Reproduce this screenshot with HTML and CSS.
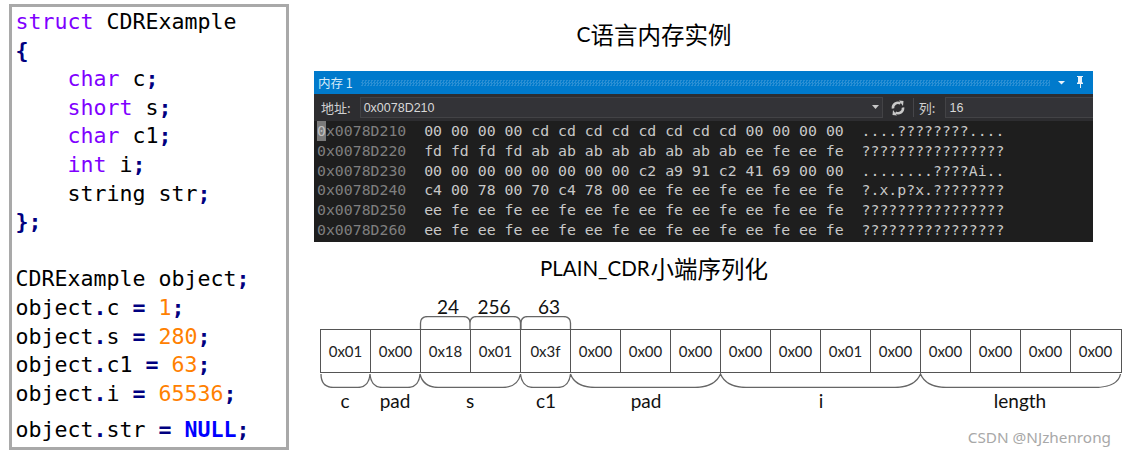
FILE: index.html
```html
<!DOCTYPE html>
<html lang="zh">
<head>
<meta charset="utf-8">
<title>CDR</title>
<link rel="stylesheet" href="styles.css">
</head>
<body>
<div class="page">
  <section class="code">
    <div class="ln"><span class="k">struct</span> CDRExample</div>
    <div class="ln"><span class="p">{</span></div>
    <div class="ln">    <span class="k">char</span> c<span class="p">;</span></div>
    <div class="ln">    <span class="k">short</span> s<span class="p">;</span></div>
    <div class="ln">    <span class="k">char</span> c1<span class="p">;</span></div>
    <div class="ln">    <span class="k">int</span> i<span class="p">;</span></div>
    <div class="ln">    string str<span class="p">;</span></div>
    <div class="ln"><span class="p">};</span></div>
    <div class="ln"> </div>
    <div class="ln">CDRExample object<span class="p">;</span></div>
    <div class="ln">object<span class="p">.</span>c <span class="p">=</span> <span class="n">1</span><span class="p">;</span></div>
    <div class="ln">object<span class="p">.</span>s <span class="p">=</span> <span class="n">280</span><span class="p">;</span></div>
    <div class="ln">object<span class="p">.</span>c1 <span class="p">=</span> <span class="n">63</span><span class="p">;</span></div>
    <div class="ln">object<span class="p">.</span>i <span class="p">=</span> <span class="n">65536</span><span class="p">;</span></div>
    <div class="ln last">object<span class="p">.</span>str <span class="p">=</span> <span class="null">NULL</span><span class="p">;</span></div>
  </section>

  <section class="right">
    <h2 class="title first"><span class="lat">C</span>语言内存实例</h2>

    <div class="mem">
      <div class="mem-title">
        <span class="mem-name">内存 1</span>
        <span class="hatch"></span>
        <svg class="ic" width="43" height="23" viewBox="0 0 43 23">
          <path d="M8 10h7l-3.500 3.500z" fill="#e8f2fa"/>
          <path d="M27 5h6v1h-1v5l1 1v1h-2v4h-1v-4h-3v-1l1-1V6h-1z" fill="#e8f2fa"/>
        </svg>
      </div>
      <div class="mem-bar">
        <span class="mem-lab">地址:</span>
        <div class="field addr"><span>0x0078D210</span>
          <svg width="8" height="5" viewBox="0 0 8 5"><path d="M0 0h7L3.500 4z" fill="#c8c8c8"/></svg>
        </div>
        <svg class="refresh" width="14" height="16" viewBox="0 0 14 16">
          <path d="M2 8.500A5 5 0 0 1 9.500 3.500M12 7.500A5 5 0 0 1 4.500 12.500" fill="none" stroke="#c8c8c8" stroke-width="2.600"/>
          <path d="M8 .5l4.500 .5-.5 5zM6 15.500l-4.500-.5.5-5z" fill="#c8c8c8"/>
        </svg>
        <span class="sep"></span>
        <span class="mem-lab">列:</span>
        <div class="field cols"><span>16</span></div>
      </div>
      <div class="mem-rows">
<div class="row"><span class="ad"><span class="cur">0</span>x0078D210</span>  00 00 00 00 cd cd cd cd cd cd cd cd 00 00 00 00  ....????????....</div>
<div class="row"><span class="ad">0x0078D220</span>  fd fd fd fd ab ab ab ab ab ab ab ab ee fe ee fe  ????????????????</div>
<div class="row"><span class="ad">0x0078D230</span>  00 00 00 00 00 00 00 00 c2 a9 91 c2 41 69 00 00  ........????Ai..</div>
<div class="row"><span class="ad">0x0078D240</span>  c4 00 78 00 70 c4 78 00 ee fe ee fe ee fe ee fe  ?.x.p?x.????????</div>
<div class="row"><span class="ad">0x0078D250</span>  ee fe ee fe ee fe ee fe ee fe ee fe ee fe ee fe  ????????????????</div>
<div class="row"><span class="ad">0x0078D260</span>  ee fe ee fe ee fe ee fe ee fe ee fe ee fe ee fe  ????????????????</div>
      </div>
    </div>

    <h2 class="title second"><span class="lat sub">PLAIN_CDR</span>小端序列化</h2>

    <div class="diagram">
      <div class="top-labels">
        <span>24</span><span>256</span><span>63</span>
      </div>
      <svg class="brace top" width="802" height="13" viewBox="320 316 802 13">
        <path d="M420.500 329V323Q420.500 316.500 428 316.500H463Q470 316.500 470 323V329M470 329V323Q470 316.500 477 316.500H513Q520.500 316.500 520.500 323V329M521 329V323Q521 316.500 528 316.500H563Q570.500 316.500 570.500 323V329"/>
      </svg>
      <div class="grid cells">
        <span>0x01</span><span>0x00</span><span>0x18</span><span>0x01</span>
        <span>0x3f</span><span>0x00</span><span>0x00</span><span>0x00</span>
        <span>0x00</span><span>0x00</span><span>0x01</span><span>0x00</span>
        <span>0x00</span><span>0x00</span><span>0x00</span><span>0x00</span>
      </div>
      <svg class="brace bottom" width="802" height="15" viewBox="320 373 802 15">
        <path d="M321 374Q321 387 333 387.500H358Q369 387 370 374Q371 387 382 387.500H408Q419 387 420 374Q423 387 438 387.500H503Q518 387 520.500 374Q522 387 533 387.500H558Q569 387 570.500 374Q575 387 595 387.500H695Q715 387 720.500 374Q726 387 746 387.500H895Q915 387 920.500 374Q926 387 946 387.500H1095Q1118 387 1120.500 374"/>
      </svg>
      <div class="grid bot-labels">
        <span class="s1">c</span><span class="s1">pad</span><span class="s2">s</span><span class="s1 nudge">c1</span><span class="s3 nudge">pad</span><span class="s4 nudge">i</span><span class="s4">length</span>
      </div>
    </div>
  </section>
</div>
<div class="mark">CSDN @NJzhenrong</div>
</body>
</html>
```

FILE: styles.css
```css
html, body {
  margin: 0;
  padding: 0;
  background: #fff;
}
body {
  width: 1126px;
  height: 456px;
  overflow: hidden;
  position: relative;
}
.page {
  display: flex;
  align-items: flex-start;
  padding: 4px 0 0 9px;
}

/* code panel */
.code {
  box-sizing: border-box;
  width: 280px;
  height: 446px;
  border: 3px solid #a9a9a9;
  padding: 1px 0 0 3.500px;
  font-family: "DejaVu Sans Mono", monospace;
  font-size: 21.600px;
  color: #000;
  flex: none;
}
.ln {
  height: 28.600px;
  line-height: 28.600px;
  white-space: pre;
}
.ln.last { margin-top: 8px; }
.k { color: #8000ff; }
.p { color: #000080; font-weight: bold; }
.n { color: #ff8000; }
.null { color: #0000ff; font-weight: bold; }

/* right column */
.right {
  margin-left: 25px;
  width: 812px;
  flex: none;
}
.title {
  margin: 0;
  height: 30px;
  line-height: 28px;
  font-family: "Noto Sans CJK SC", sans-serif;
  font-weight: 400;
  font-size: 23.500px;
  color: #000;
  display: flex;
  justify-content: center;
  width: 680px;
}
.title.first { margin: 16px 0 21px; }
.title.second { margin: 12px 0 12px; width: 680px; }
.lat {
  font-family: "Lato", sans-serif;
  font-size: 21px;
}
.lat.sub {
  font-size: 20.500px;
  margin-right: 1px;
}

/* memory window */
.mem {
  width: 779px;
  height: 171px;
  background: #1e1e1e;
  font-family: "Noto Sans CJK SC", sans-serif;
  display: flex;
  flex-direction: column;
}
.mem-title {
  height: 23px;
  background: #007acc;
  display: flex;
  align-items: center;
  padding-left: 4px;
  color: #d8ebf8;
  font-size: 12.500px;
  flex: none;
}
.mem-name { margin-right: 8px; }
.hatch {
  flex: 1;
  height: 6px;
  background-image: repeating-conic-gradient(#2a8fd4 0 25%, #007acc 0 50%);
  background-size: 3px 3px;
}
.ic { flex: none; }
.mem-bar {
  height: 27px;
  background: #2d2d30;
  display: flex;
  align-items: center;
  padding-left: 7px;
  color: #d0d0d0;
  font-size: 13px;
  flex: none;
}
.mem-lab { flex: none; }
.field {
  box-sizing: border-box;
  height: 21px;
  background: #333337;
  border: 1px solid #434346;
  display: flex;
  align-items: center;
  justify-content: space-between;
  padding: 0 2px 0 3px;
  font-family: "Liberation Sans", sans-serif;
  font-size: 12.500px;
  color: #d8d8d8;
}
.addr { width: 525px; margin-left: 9px; }
.cols { width: 148px; margin-left: 10px; border-right: 0; }
.refresh { margin-left: 8px; flex: none; }
.sep {
  width: 1px;
  height: 19px;
  background: #46464a;
  margin: 0 5px 0 8px;
  flex: none;
}
.mem-rows {
  padding: 0 0 0 3px;
  font-family: "DejaVu Sans Mono", monospace;
  font-size: 14.830px;
  color: #c8c8c8;
}
.row {
  height: 19.800px;
  line-height: 19.800px;
  white-space: pre;
}
.ad { color: #7f7f7f; }
.cur { background: #7a7a7a; color: #c0c0c0; display: inline-block; height: 19.800px; }

/* serialization diagram */
.diagram {
  width: 802px;
  margin-left: 6px;
  font-family: "Lato", sans-serif;
}
.grid {
  display: grid;
  grid-template-columns: repeat(16, 50px);
}
.top-labels {
  display: grid;
  grid-template-columns: 48px 44px 66px;
  height: 20px;
  padding-left: 104px;
  line-height: 22px;
  font-size: 19px;
  color: #111;
  text-align: center;
}
.brace {
  display: block;
  fill: none;
  stroke: #666;
  stroke-width: 1.300px;
}
.cells {
  box-sizing: border-box;
  width: 802px;
  height: 44px;
  border: 1px solid #555;
  border-width: 1px 1px 1px 0;
  font-size: 15px;
  color: #222;
  text-align: center;
  line-height: 42px;
}
.cells span {
  border-left: 1px solid #555;
  height: 42px;
}
.bot-labels {
  height: 26px;
  line-height: 26px;
  font-size: 19px;
  color: #111;
  text-align: center;
}
.nudge { padding-left: 2px; }
.s1 { grid-column: span 1; }
.s2 { grid-column: span 2; }
.s3 { grid-column: span 3; }
.s4 { grid-column: span 4; }

.mark {
  position: absolute;
  right: 15px;
  top: 427px;
  font-family: "Noto Sans", sans-serif;
  font-size: 15.300px;
  line-height: 20px;
  color: #a8a8a8;
}
```
